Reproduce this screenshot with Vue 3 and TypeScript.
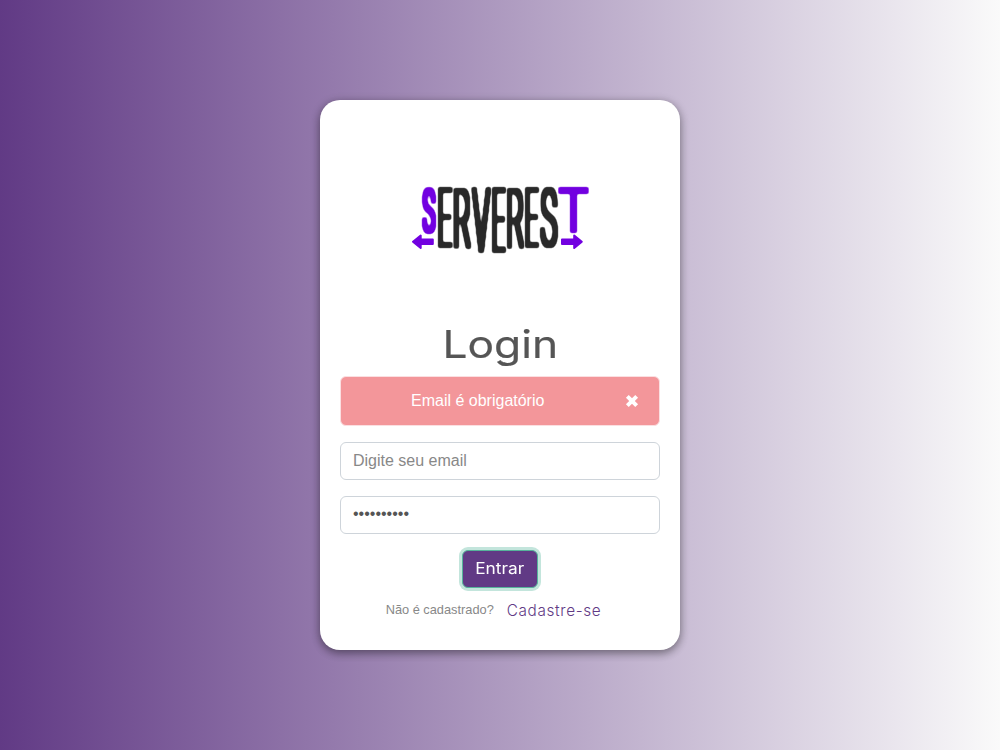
<script setup lang="ts">
import { ref } from 'vue'

interface LogoLetter {
  char: string
  left: number
  right: number
  top: number
  bottom: number
  accent?: boolean
  weight?: number
}

interface PlacedLetter {
  char: string
  transform: string
  accent: boolean
  heavy: boolean
}

// Total thickness that the "thicken" filter adds to each thin letter.
const GROWTH = 4.4
const FONT_SIZE = 100

const letters: LogoLetter[] = [
  { char: 'S', left: 11.8, right: 26.2, top: 6.6, bottom: 53.3, accent: true },
  { char: 'E', left: 28, right: 42.8, top: 6.8, bottom: 68 },
  { char: 'R', left: 43.5, right: 61.2, top: 6.8, bottom: 68 },
  { char: 'V', left: 61.3, right: 81.2, top: 6.8, bottom: 73.3 },
  { char: 'E', left: 81.8, right: 96, top: 6.8, bottom: 73.3 },
  { char: 'R', left: 96.6, right: 114.3, top: 6.8, bottom: 68 },
  { char: 'E', left: 114.8, right: 129.3, top: 6.8, bottom: 68 },
  { char: 'S', left: 129.8, right: 148, top: 6.6, bottom: 68.3 },
  { char: 'T', left: 148.2, right: 178.8, top: 6.8, bottom: 53.3, accent: true, weight: 300 },
]

// Fits each letter's ink to its box, leaving room for the added thickness.
function place(items: LogoLetter[]): PlacedLetter[] {
  const ctx = document.createElement('canvas').getContext('2d')!
  return items.map((l) => {
    ctx.font = `${l.weight ?? 100} ${FONT_SIZE}px Roboto, sans-serif`
    const m = ctx.measureText(l.char)
    const inkW = m.actualBoundingBoxRight + m.actualBoundingBoxLeft
    const inkH = m.actualBoundingBoxAscent + m.actualBoundingBoxDescent
    const sx = (l.right - l.left - GROWTH) / inkW
    const sy = (l.bottom - l.top - GROWTH) / inkH
    const x = l.left + GROWTH / 2 + m.actualBoundingBoxLeft * sx
    const y = l.bottom - GROWTH / 2 - m.actualBoundingBoxDescent * sy
    return {
      char: l.char,
      transform: `translate(${x} ${y}) scale(${sx} ${sy})`,
      accent: !!l.accent,
      heavy: l.weight === 300,
    }
  })
}

const logo = place(letters)
const email = ref('')
const password = ref('serverest1')
const showAlert = ref(true)
</script>

<template>
  <main class="page">
    <form class="card" novalidate @submit.prevent="showAlert = !email">
      <svg class="logo" viewBox="0 0 180 80" role="img" aria-label="ServeRest">
        <defs>
          <filter
            id="thicken"
            filterUnits="userSpaceOnUse"
            x="0"
            y="0"
            width="180"
            height="80"
            color-interpolation-filters="sRGB"
          >
            <feComponentTransfer>
              <feFuncA type="linear" slope="2.4" intercept="0" />
            </feComponentTransfer>
            <feMorphology operator="dilate" radius="2" />
            <feGaussianBlur stdDeviation="0.85" />
            <feComponentTransfer>
              <feFuncA type="linear" slope="2.3" intercept="-0.6" />
            </feComponentTransfer>
          </filter>
        </defs>
        <g v-for="(l, i) in logo" :key="i" filter="url(#thicken)">
          <text
            class="letter"
            :class="{ accent: l.accent, heavy: l.heavy }"
            :transform="l.transform"
          >{{ l.char }}</text>
        </g>
        <g class="arrows">
          <path d="M3 61.7 10.7 55.6V59.5H22.8V63.9H10.7V68Z" />
          <path d="M152 59.5H164.2V55.6L171.8 61.7 164.2 68V63.9H152Z" />
        </g>
      </svg>

      <h1 class="title"><span>Login</span></h1>

      <div v-if="showAlert" class="alert" role="alert">
        <span class="message">Email é obrigatório</span>
        <button type="button" class="close" aria-label="Fechar" @click="showAlert = false">
          <svg viewBox="0 0 12 12"><path d="M2 2 10 10M10 2 2 10" /></svg>
        </button>
      </div>

      <input v-model="email" class="field" type="email" placeholder="Digite seu email" />
      <input v-model="password" class="field secret" type="password" placeholder="Digite sua senha" />

      <button class="submit" type="submit"><span>Entrar</span></button>

      <p class="signup">
        <small>Não é cadastrado?</small>
        <a href="#">Cadastre-se</a>
      </p>
    </form>
  </main>
</template>

<style>
body {
  margin: 0;
}
</style>

<style scoped>
.page {
  box-sizing: border-box;
  width: 100%;
  height: 100vh;
  display: flex;
  align-items: center;
  justify-content: center;
  background: linear-gradient(to right, #613a85, #fafafa);
  font-family: "Liberation Sans", Arial, sans-serif;
  font-size: 16px;
  line-height: 24px;
}

.card {
  box-sizing: border-box;
  width: 360px;
  height: 550px;
  padding: 80px 20px 0;
  display: flex;
  flex-direction: column;
  align-items: center;
  background: #fff;
  border-radius: 20px;
  box-shadow: 0 4px 8px 0 rgba(0, 0, 0, 0.2), 0 2px 10px 0 rgba(0, 0, 0, 0.3);
}

.logo {
  width: 180px;
  height: 80px;
  flex: none;
  overflow: visible;
}

.letter {
  font-family: Roboto, sans-serif;
  font-size: 100px;
  font-weight: 100;
  fill: #292929;
}

.letter.accent {
  fill: #7200e0;
}

.letter.heavy {
  font-weight: 300;
}

.arrows {
  fill: #7200e0;
  stroke: #7200e0;
  stroke-width: 2;
  stroke-linejoin: round;
}

.title {
  margin: 60px 0 8px;
  height: 48px;
  font: 400 38.5px/48px Inter, sans-serif;
  color: #555;
  -webkit-text-stroke: 0.2px #555;
}

.title span,
.submit span {
  display: inline-block;
}

.title span {
  transform: scaleX(1.15);
}

.alert {
  box-sizing: border-box;
  width: 100%;
  height: 50px;
  margin-bottom: 16px;
  display: flex;
  align-items: center;
  justify-content: space-between;
  padding: 0 20px 0 70px;
  color: #fff;
  background: #f3969a;
  border: 1px solid #fbdfe1;
  border-radius: 6px;
}

.close {
  display: flex;
  margin-bottom: 1px;
  padding: 0;
  border: 0;
  background: none;
}

.close svg {
  width: 14px;
  height: 14px;
}

.close path {
  stroke: #fff;
  stroke-width: 3.4;
}

.field {
  box-sizing: border-box;
  width: 100%;
  height: 38px;
  margin: 0 0 16px;
  padding: 6px 12px;
  font: 16px/24px "Liberation Sans", Arial, sans-serif;
  color: #555;
  background: #fff;
  border: 1px solid #ced4da;
  border-radius: 6px;
  outline: 0;
}

.field.secret {
  padding: 5px 12px 7px;
}

.field::placeholder {
  color: #888;
  opacity: 1;
}

.submit {
  box-sizing: border-box;
  width: 76px;
  height: 38px;
  padding: 0;
  font: 400 15.3px/24px Inter, sans-serif;
  color: #fff;
  background: #613a85;
  border: 1px solid #56b39b;
  border-radius: 6px;
  box-shadow: 0 0 0 3px #c3e5dc;
}

.submit span {
  transform: scaleX(1.13);
}

.signup {
  display: flex;
  align-items: center;
  gap: 13px;
  margin: 10px 0 0;
  height: 24px;
  padding-right: 13px;
}

.signup small {
  font-size: 12.8px;
  color: #888;
}

.signup a {
  padding-top: 2px;
  font: 300 15.3px/24px Inter, sans-serif;
  letter-spacing: 0.65px;
  color: #613a85;
  text-decoration: none;
}
</style>
